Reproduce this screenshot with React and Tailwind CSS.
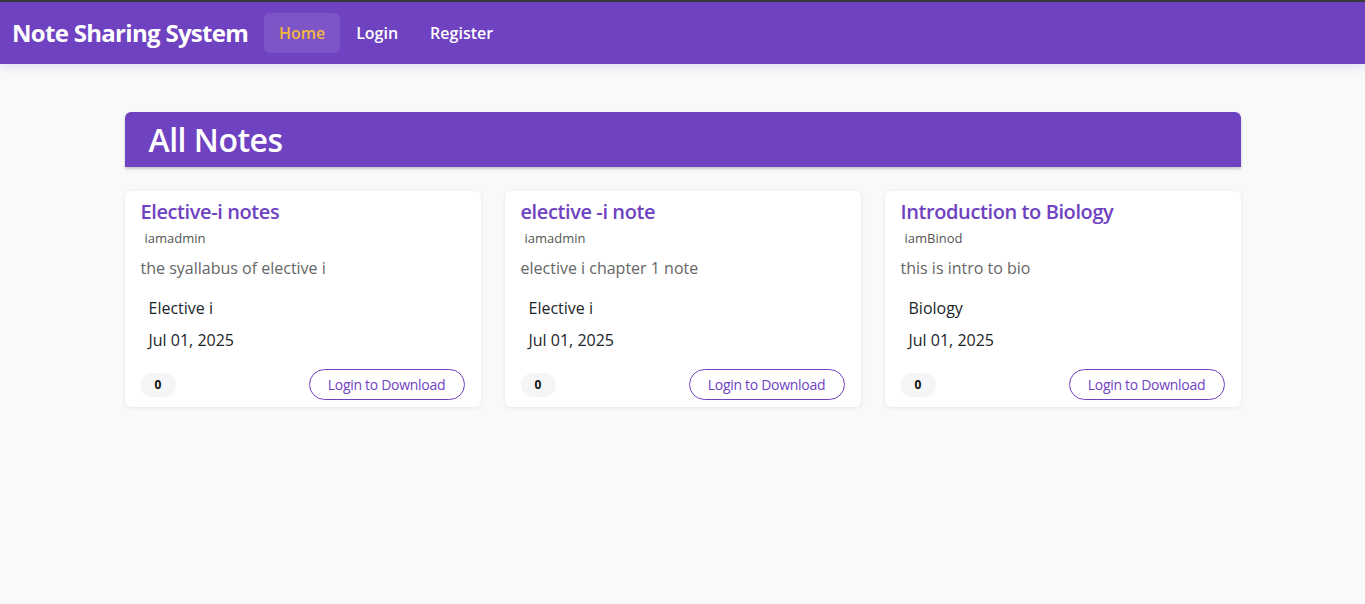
import React from 'react';

const notes = [
  {
    title: 'Elective-i notes',
    user: 'iamadmin',
    desc: 'the syallabus of elective i',
    subject: 'Elective i',
    date: 'Jul 01, 2025',
    downloads: 0,
  },
  {
    title: 'elective -i note',
    user: 'iamadmin',
    desc: 'elective i chapter 1 note',
    subject: 'Elective i',
    date: 'Jul 01, 2025',
    downloads: 0,
  },
  {
    title: 'Introduction to Biology',
    user: 'iamBinod',
    desc: 'this is intro to bio',
    subject: 'Biology',
    date: 'Jul 01, 2025',
    downloads: 0,
  },
];

function NoteCard({ note }) {
  return (
    <div className="bg-white rounded-md shadow-[0_1px_4px_rgba(0,0,0,0.08)] px-4 pt-[9px] pb-[7px] flex flex-col">
      <h3 className="text-[20px] leading-[24px] font-semibold text-[#6f42c1] tracking-[-0.4px]">{note.title}</h3>
      <div className="text-[13px] leading-[18px] text-[#555] pl-1 mt-[5px]">{note.user}</div>
      <p className="text-[16px] leading-[24px] text-[#666] mt-[9px]">{note.desc}</p>
      <div className="text-[16px] leading-[24px] text-[#212529] pl-2 mt-[16px]">{note.subject}</div>
      <div className="text-[16px] leading-[24px] text-[#212529] pl-2 mt-[8px]">{note.date}</div>
      <div className="flex items-center justify-between mt-[17px]">
        <span className="bg-[#f4f5f7] rounded-full w-[35px] h-[24px] grid place-items-center text-[12px] font-bold text-[#111]">
          {note.downloads}
        </span>
        <button className="border border-[#6f42c1] text-[#6f42c1] rounded-full h-[31px] w-[156px] text-[14px] tracking-[-0.3px]">
          Login to Download
        </button>
      </div>
    </div>
  );
}

export default function App() {
  return (
    <div className="min-h-screen bg-[#f8f9fa] font-['Open_Sans','Noto_Sans',sans-serif]">
      <nav className="h-[64px] bg-[#6f42c1] border-t-2 border-[#3a3a3a] flex items-center px-3 shadow-[0_3px_8px_rgba(111,66,193,0.15)]">
        <span className="text-white text-[24px] font-bold mr-4 tracking-[-0.7px]">Note Sharing System</span>
        <a className="h-[40px] w-[76px] rounded-md bg-white/10 grid place-items-center text-[16px] font-semibold text-[#f4b740]">
          Home
        </a>
        <a className="px-4 text-[16px] font-semibold text-white">Login</a>
        <a className="px-4 text-[16px] font-semibold text-white">Register</a>
      </nav>

      <main className="w-[1116px] mx-auto pt-[48px]">
        <div className="bg-[#6f42c1] rounded-t-md h-[55px] flex items-center px-6 shadow-[0_2px_3px_rgba(0,0,0,0.2)]">
          <h1 className="text-white text-[32px] font-semibold tracking-[-0.5px]">All Notes</h1>
        </div>
        <div className="grid grid-cols-3 gap-6 mt-6">
          {notes.map((n) => (
            <NoteCard key={n.title} note={n} />
          ))}
        </div>
      </main>
    </div>
  );
}
